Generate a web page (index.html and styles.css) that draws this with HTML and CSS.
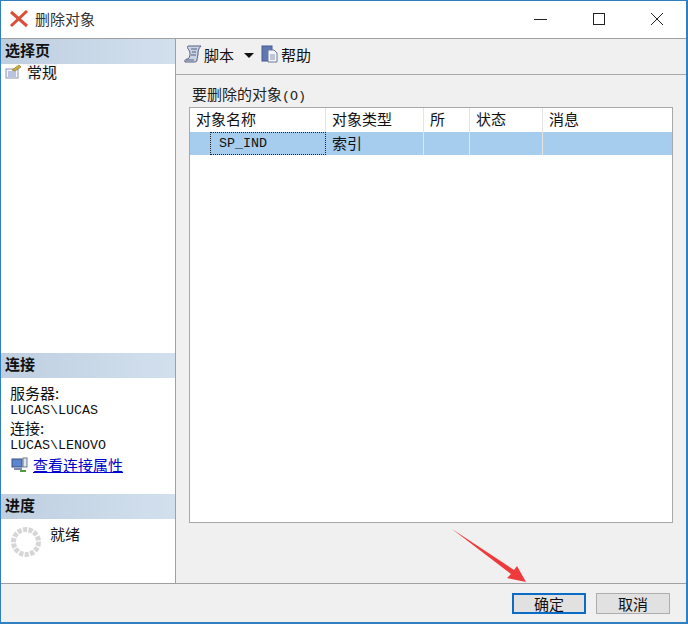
FILE: index.html
```html
<!DOCTYPE html>
<html lang="zh-CN">

<head>
    <meta charset="UTF-8">
    <title>删除对象</title>
    <link rel="stylesheet" href="styles.css">
</head>

<body>
    <div class="window">
        <!-- 标题栏 -->
        <div class="titlebar">
            <svg class="title-icon" width="20" height="18" viewBox="0 0 20 18">
                <path d="M2 2 L18 16 M18 1 L2 16" stroke="#d9503a" stroke-width="3" fill="none" />
            </svg>
            <span class="title-text">删除对象</span>
            <div class="win-btns">
                <svg width="14" height="14" viewBox="0 0 14 14"><path d="M0 7.5 H13" stroke="#222" fill="none" /></svg>
                <svg width="14" height="14" viewBox="0 0 14 14"><rect x="1.5" y="1.5" width="11" height="11" stroke="#222" fill="none" /></svg>
                <svg width="14" height="14" viewBox="0 0 14 14"><path d="M1 1 L13 13 M13 1 L1 13" stroke="#222" fill="none" /></svg>
            </div>
        </div>

        <div class="content">
            <!-- 左边栏 -->
            <div class="sidebar">
                <div class="side-head">选择页</div>
                <div class="page-item">
                    <svg width="17" height="15" viewBox="0 0 17 15">
                        <rect x="1" y="5" width="12" height="9" fill="#f4f6fb" stroke="#8a93ad" />
                        <path d="M3 8 H11 M3 10 H11 M3 12 H11" stroke="#7f8fc0" />
                        <path d="M7 6 L14 1 L16 3 L10 7 Z" fill="#c9b03c" stroke="#7c6a20" stroke-width="0.6" />
                    </svg>
                    <span class="page-name">常规</span>
                </div>
                <div class="side-fill"></div>

                <div class="side-head">连接</div>
                <div class="conn">
                    <div class="conn-label">服务器:</div>
                    <div class="conn-val">LUCAS\LUCAS</div>
                    <div class="conn-label conn-second">连接:</div>
                    <div class="conn-val">LUCAS\LENOVO</div>
                    <div class="conn-link">
                        <svg width="17" height="16" viewBox="0 0 17 16">
                            <rect x="1" y="2" width="10" height="8" fill="#5a86d0" stroke="#3a4f80" />
                            <rect x="3" y="11" width="8" height="2" fill="#7d8db0" />
                            <rect x="12" y="1" width="4" height="9" fill="#dfe6f2" stroke="#6a7a90" />
                            <path d="M9 14 H15" stroke="#4f9d3a" stroke-width="2" />
                        </svg>
                        <a href="#">查看连接属性</a>
                    </div>
                </div>

                <div class="side-head">进度</div>
                <div class="progress">
                    <svg width="32" height="32" viewBox="0 0 32 32">
                        <circle cx="16" cy="16" r="12.5" fill="none" stroke="#d6d6d6" stroke-width="5" stroke-dasharray="4.2 1.35" />
                    </svg>
                    <span class="progress-text">就绪</span>
                </div>
            </div>

            <!-- 右侧内容 -->
            <div class="main">
                <div class="toolbar">
                    <svg width="20" height="20" viewBox="0 0 20 20">
                        <path d="M5 2 H18 C16 4 15 6 15 9 C15 12 14 14 14 16 C14 18 12 18 11 18 H2 C1 16 3 15 5 15 C7 13 7 11 7 9 C7 6 3 4 5 2 Z" fill="#c9d2e6" stroke="#55607e" />
                        <path d="M8 5 H14 M9 8 H13 M8 11 H13 M3 16 H11" stroke="#55607e" />
                    </svg>
                    <span class="tool-text tool-first">脚本</span>
                    <span class="tool-arrow"></span>
                    <svg width="18" height="18" viewBox="0 0 18 18">
                        <rect x="1" y="1" width="10" height="15" fill="#5f78b4" stroke="#46598c" />
                        <path d="M7 5 H13 L16 8 V17 H7 Z" fill="#f3f5fa" stroke="#6a7896" />
                        <path d="M9 10 H14 M9 12 H14 M9 14 H14" stroke="#8a96b0" />
                    </svg>
                    <span class="tool-text">帮助</span>
                </div>

                <div class="panel">
                    <div class="panel-title">要删除的对象<span class="mono">(O)</span></div>
                    <div class="grid">
                        <div class="grid-row grid-head">
                            <div class="cell c-name">对象名称</div>
                            <div class="cell c-type">对象类型</div>
                            <div class="cell c-own">所</div>
                            <div class="cell c-state">状态</div>
                            <div class="cell c-msg">消息</div>
                        </div>
                        <div class="grid-row grid-sel">
                            <div class="cell c-mark"></div>
                            <div class="cell c-value">SP_IND</div>
                            <div class="cell c-type">索引</div>
                            <div class="cell c-own"></div>
                            <div class="cell c-state"></div>
                            <div class="cell c-msg"></div>
                        </div>
                    </div>
                </div>
            </div>
        </div>

        <!-- 底部按钮 -->
        <div class="footer">
            <button class="btn btn-default">确定</button>
            <button class="btn">取消</button>
        </div>

        <!-- 红色箭头标注 -->
        <svg class="arrow" width="80" height="60" viewBox="0 0 80 60">
            <path d="M1 1 L63 42 L66 38 L75 54 L56 50 L60 46 Z" fill="#ee3a3a" />
        </svg>
    </div>
</body>

</html>
```

FILE: styles.css
```css
* {
    margin: 0;
    padding: 0;
    box-sizing: border-box;
}

body {
    width: 688px;
    height: 624px;
    overflow: hidden;
    font-family: "Noto Sans CJK SC", "Liberation Sans", sans-serif;
    font-size: 15px;
    color: #111;
}

.mono {
    font-family: "Liberation Mono", monospace;
    font-size: 13.33px;
}

.window {
    width: 688px;
    height: 624px;
    border: 1px solid #2f7fc1;
    border-right-width: 2px;
    border-bottom-width: 2px;
    background-color: #f0f0f0;
    display: flex;
    flex-direction: column;
    position: relative;
}

.titlebar {
    height: 38px;
    flex: none;
    background-color: #fff;
    display: flex;
    align-items: center;
    padding: 0 0 2px 8px;
    border-bottom: 1px solid #a0a0a0;
}

.title-text {
    margin-left: 6px;
    font-size: 15px;
    color: #333;
}

.win-btns {
    margin-left: auto;
    display: flex;
    gap: 44px;
    padding-right: 22px;
}

.content {
    flex: 1;
    display: flex;
    min-height: 0;
}

.sidebar {
    width: 175px;
    flex: none;
    background-color: #fff;
    border-right: 1px solid #a0a0a0;
    border-bottom: 1px solid #a0a0a0;
    display: flex;
    flex-direction: column;
}

.side-head {
    height: 25px;
    flex: none;
    padding-left: 4px;
    font-size: 15px;
    font-weight: bold;
    line-height: 21px;
    background: linear-gradient(to right, #bfcfe0, #d2e0ee);
}

.page-item {
    display: flex;
    align-items: flex-start;
    height: 17px;
    padding-left: 4px;
}

.page-name {
    margin-left: 5px;
    line-height: 16px;
    background-color: #f4f4f4;
}

.side-fill {
    flex: 1;
}

.conn {
    height: 116px;
    flex: none;
    padding: 7px 0 0 9px;
}

.conn-label {
    height: 16px;
    line-height: 16px;
}

.conn-second {
    margin-top: 3px;
}

.conn-val {
    height: 16px;
    line-height: 20px;
    font-family: "Liberation Mono", monospace;
    font-size: 13.33px;
}

.conn-link {
    display: flex;
    align-items: center;
    gap: 5px;
    margin-top: 2px;
    padding-left: 1px;
}

.conn-link a {
    color: #0000cc;
}

.progress {
    height: 64px;
    flex: none;
    display: flex;
    align-items: flex-start;
    padding: 7px 0 0 9px;
}

.progress-text {
    margin: -3px 0 0 8px;
}

.main {
    flex: 1;
    display: flex;
    flex-direction: column;
    border-bottom: 1px solid #a0a0a0;
}

.toolbar {
    height: 36px;
    flex: none;
    display: flex;
    align-items: center;
    padding: 0 0 5px 7px;
    border-bottom: 1px solid #a8a8a8;
}

.tool-text {
    margin-left: 2px;
}

.tool-first {
    margin-left: 1px;
}

.tool-arrow {
    width: 0;
    height: 0;
    margin: 2px 7px 0 10px;
    border-left: 5px solid transparent;
    border-right: 5px solid transparent;
    border-top: 5px solid #111;
}

.panel {
    flex: 1;
    display: flex;
    flex-direction: column;
    padding: 9px 13px 60px 13px;
    min-height: 0;
}

.panel-title {
    height: 23px;
    padding-left: 3px;
    line-height: 20px;
    color: #222;
}

.grid {
    flex: 1;
    background-color: #fff;
    border: 1px solid #a8a8a8;
}

.grid-row {
    display: flex;
}

.grid-head {
    height: 24px;
    line-height: 21px;
}

.grid-sel {
    height: 23px;
    line-height: 22px;
    background-color: #a6cdee;
}

.cell {
    padding-left: 6px;
    border-right: 1px solid #e4e4e4;
    flex: none;
}

.c-name {
    width: 136px;
}

.c-mark {
    width: 20px;
    padding: 0;
    border: 0;
}

.c-value {
    width: 116px;
    padding-left: 8px;
    border: 1px dotted #222;
    line-height: 22px;
    font-family: "Liberation Mono", monospace;
    font-size: 13.33px;
}

.c-type {
    width: 98px;
}

.c-own {
    width: 46px;
}

.c-state {
    width: 73px;
}

.c-msg {
    flex: 1;
    border-right: 0;
}

.footer {
    height: 38px;
    flex: none;
    display: flex;
    justify-content: flex-end;
    align-items: center;
    gap: 10px;
    padding: 0 16px 0 0;
}

.btn {
    width: 74px;
    height: 21px;
    font-family: inherit;
    font-size: 15px;
    line-height: 17px;
    color: #111;
    background-color: #e1e1e1;
    border: 1px solid #adadad;
}

.btn-default {
    border: 2px solid #0a6cc4;
}

/* 标注箭头盖在按钮上方 */
.arrow {
    position: absolute;
    left: 450px;
    top: 527px;
}
```
